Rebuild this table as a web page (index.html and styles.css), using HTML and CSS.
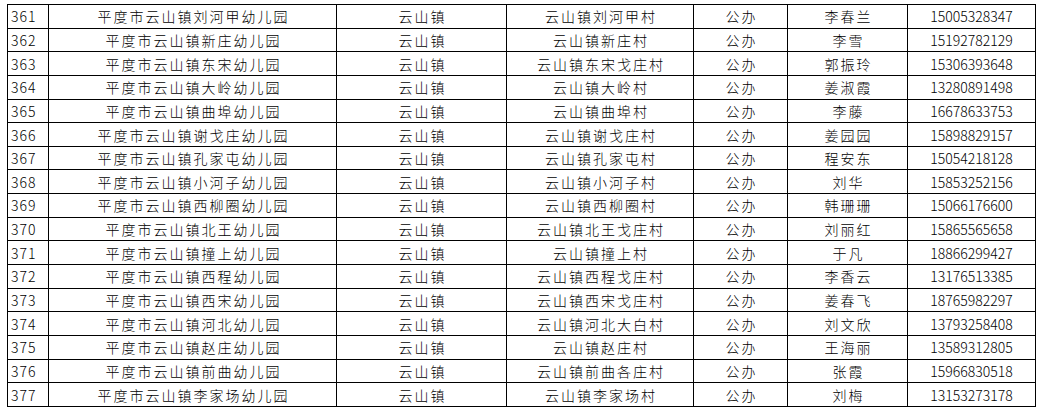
FILE: index.html
```html
<!DOCTYPE html>
<html lang="zh">
<head>
<meta charset="utf-8">
<title>幼儿园名单</title>
<link rel="stylesheet" href="styles.css">
</head>
<body>
<table class="list">
<colgroup>
<col class="c-idx"><col class="c-name"><col class="c-town"><col class="c-vil"><col class="c-type"><col class="c-person"><col class="c-phone">
</colgroup>
<tbody>
<tr><td class="idx">361</td><td class="cjk">平度市云山镇刘河甲幼儿园</td><td class="cjk">云山镇</td><td class="cjk">云山镇刘河甲村</td><td class="cjk">公办</td><td class="cjk">李春兰</td><td class="num">15005328347</td></tr>
<tr><td class="idx">362</td><td class="cjk">平度市云山镇新庄幼儿园</td><td class="cjk">云山镇</td><td class="cjk">云山镇新庄村</td><td class="cjk">公办</td><td class="cjk">李雪</td><td class="num">15192782129</td></tr>
<tr><td class="idx">363</td><td class="cjk">平度市云山镇东宋幼儿园</td><td class="cjk">云山镇</td><td class="cjk">云山镇东宋戈庄村</td><td class="cjk">公办</td><td class="cjk">郭振玲</td><td class="num">15306393648</td></tr>
<tr><td class="idx">364</td><td class="cjk">平度市云山镇大岭幼儿园</td><td class="cjk">云山镇</td><td class="cjk">云山镇大岭村</td><td class="cjk">公办</td><td class="cjk">姜淑霞</td><td class="num">13280891498</td></tr>
<tr><td class="idx">365</td><td class="cjk">平度市云山镇曲埠幼儿园</td><td class="cjk">云山镇</td><td class="cjk">云山镇曲埠村</td><td class="cjk">公办</td><td class="cjk">李藤</td><td class="num">16678633753</td></tr>
<tr><td class="idx">366</td><td class="cjk">平度市云山镇谢戈庄幼儿园</td><td class="cjk">云山镇</td><td class="cjk">云山镇谢戈庄村</td><td class="cjk">公办</td><td class="cjk">姜园园</td><td class="num">15898829157</td></tr>
<tr><td class="idx">367</td><td class="cjk">平度市云山镇孔家屯幼儿园</td><td class="cjk">云山镇</td><td class="cjk">云山镇孔家屯村</td><td class="cjk">公办</td><td class="cjk">程安东</td><td class="num">15054218128</td></tr>
<tr><td class="idx">368</td><td class="cjk">平度市云山镇小河子幼儿园</td><td class="cjk">云山镇</td><td class="cjk">云山镇小河子村</td><td class="cjk">公办</td><td class="cjk">刘华</td><td class="num">15853252156</td></tr>
<tr><td class="idx">369</td><td class="cjk">平度市云山镇西柳圈幼儿园</td><td class="cjk">云山镇</td><td class="cjk">云山镇西柳圈村</td><td class="cjk">公办</td><td class="cjk">韩珊珊</td><td class="num">15066176600</td></tr>
<tr><td class="idx">370</td><td class="cjk">平度市云山镇北王幼儿园</td><td class="cjk">云山镇</td><td class="cjk">云山镇北王戈庄村</td><td class="cjk">公办</td><td class="cjk">刘丽红</td><td class="num">15865565658</td></tr>
<tr><td class="idx">371</td><td class="cjk">平度市云山镇撞上幼儿园</td><td class="cjk">云山镇</td><td class="cjk">云山镇撞上村</td><td class="cjk">公办</td><td class="cjk">于凡</td><td class="num">18866299427</td></tr>
<tr><td class="idx">372</td><td class="cjk">平度市云山镇西程幼儿园</td><td class="cjk">云山镇</td><td class="cjk">云山镇西程戈庄村</td><td class="cjk">公办</td><td class="cjk">李香云</td><td class="num">13176513385</td></tr>
<tr><td class="idx">373</td><td class="cjk">平度市云山镇西宋幼儿园</td><td class="cjk">云山镇</td><td class="cjk">云山镇西宋戈庄村</td><td class="cjk">公办</td><td class="cjk">姜春飞</td><td class="num">18765982297</td></tr>
<tr><td class="idx">374</td><td class="cjk">平度市云山镇河北幼儿园</td><td class="cjk">云山镇</td><td class="cjk">云山镇河北大白村</td><td class="cjk">公办</td><td class="cjk">刘文欣</td><td class="num">13793258408</td></tr>
<tr><td class="idx">375</td><td class="cjk">平度市云山镇赵庄幼儿园</td><td class="cjk">云山镇</td><td class="cjk">云山镇赵庄村</td><td class="cjk">公办</td><td class="cjk">王海丽</td><td class="num">13589312805</td></tr>
<tr><td class="idx">376</td><td class="cjk">平度市云山镇前曲幼儿园</td><td class="cjk">云山镇</td><td class="cjk">云山镇前曲各庄村</td><td class="cjk">公办</td><td class="cjk">张霞</td><td class="num">15966830518</td></tr>
<tr><td class="idx">377</td><td class="cjk">平度市云山镇李家场幼儿园</td><td class="cjk">云山镇</td><td class="cjk">云山镇李家场村</td><td class="cjk">公办</td><td class="cjk">刘梅</td><td class="num">13153273178</td></tr>
</tbody>
</table>
</body>
</html>
```
FILE: styles.css
```css
html, body {
  margin: 0;
  padding: 0;
  background: #ffffff;
}
body {
  padding: 4px 0 0 7px;
  font-family: "Noto Sans CJK SC", "Noto Sans", sans-serif;
  font-size: 14px;
  font-weight: 300;
  color: #000000;
}
.list {
  border-collapse: collapse;
  table-layout: fixed;
  width: 1029px;
}
.c-idx { width: 41px; }
.c-name { width: 288px; }
.c-town { width: 170px; }
.c-vil { width: 187px; }
.c-type { width: 94px; }
.c-person { width: 120px; }
.c-phone { width: 128px; }
.list tr {
  height: 23.65px;
}
.list td {
  border: 1px solid #000000;
  padding: 0;
  line-height: 20px;
  text-align: center;
  vertical-align: middle;
  white-space: nowrap;
  overflow: hidden;
}
.list td.idx {
  text-align: left;
  padding-left: 3px;
  letter-spacing: 1px;
}
.list td.cjk {
  letter-spacing: 2px;
  text-indent: 2px;
}
.list td.num {
  letter-spacing: 0;
}
```
